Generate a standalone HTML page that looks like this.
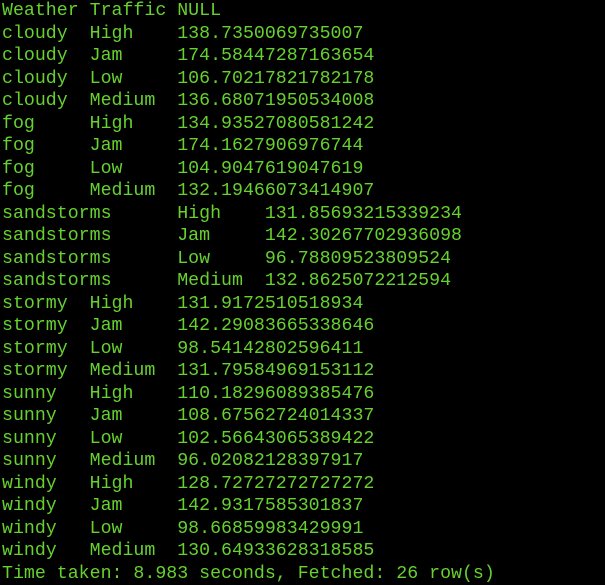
<!DOCTYPE html>
<html><head><style>
html,body{margin:0;padding:0;background:#000;width:605px;height:584px;overflow:hidden}
pre{margin:0;position:absolute;left:2px;top:0px;font-family:"Liberation Mono",monospace;font-size:18.25px;line-height:22.52px;color:#66d12f;tab-size:8;-moz-tab-size:8;white-space:pre}
</style></head><body><pre>Weather	Traffic	NULL
cloudy	High	138.7350069735007
cloudy	Jam	174.58447287163654
cloudy	Low	106.70217821782178
cloudy	Medium	136.68071950534008
fog	High	134.93527080581242
fog	Jam	174.1627906976744
fog	Low	104.9047619047619
fog	Medium	132.19466073414907
sandstorms	High	131.85693215339234
sandstorms	Jam	142.30267702936098
sandstorms	Low	96.78809523809524
sandstorms	Medium	132.8625072212594
stormy	High	131.9172510518934
stormy	Jam	142.29083665338646
stormy	Low	98.54142802596411
stormy	Medium	131.79584969153112
sunny	High	110.18296089385476
sunny	Jam	108.67562724014337
sunny	Low	102.56643065389422
sunny	Medium	96.02082128397917
windy	High	128.72727272727272
windy	Jam	142.9317585301837
windy	Low	98.66859983429991
windy	Medium	130.64933628318585
Time taken: 8.983 seconds, Fetched: 26 row(s)</pre></body></html>
